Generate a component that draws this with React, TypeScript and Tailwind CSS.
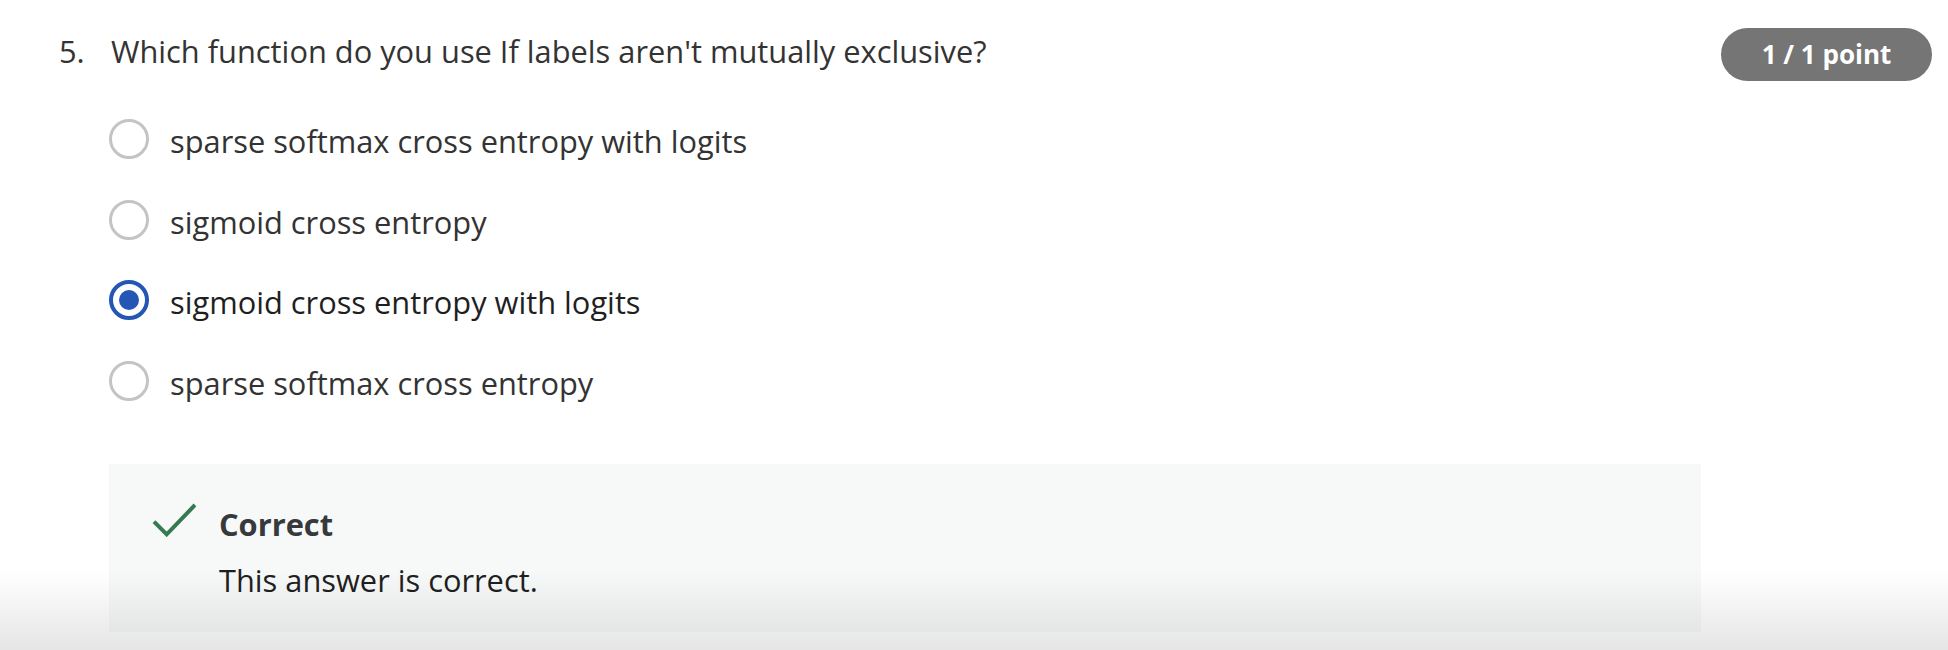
import React from 'react';

const options = [
  { id: 'a', label: 'sparse softmax cross entropy with logits', selected: false },
  { id: 'b', label: 'sigmoid cross entropy', selected: false },
  { id: 'c', label: 'sigmoid cross entropy with logits', selected: true },
  { id: 'd', label: 'sparse softmax cross entropy', selected: false },
];

function Radio({ selected }: { selected: boolean }) {
  if (selected) {
    return (
      <span className="flex h-[40px] w-[40px] shrink-0 items-center justify-center rounded-full border-[4px] border-[#2456b5] bg-white">
        <span className="h-[20px] w-[20px] rounded-full bg-[#2456b5]" />
      </span>
    );
  }
  return <span className="h-[40px] w-[40px] shrink-0 rounded-full border-[3px] border-[#c4c4c4] bg-white" />;
}

export default function App() {
  return (
    <div className="relative h-[650px] w-[1948px] overflow-hidden bg-white font-['Open_Sans',sans-serif] text-[#333333]">
      <div className="flex items-start justify-between pl-[59px] pr-[16px] pt-[28px]">
        <div className="mt-[2px] flex text-[30.8px] leading-[42px]">
          <span className="w-[52px]">5.</span>
          <span>Which function do you use If labels aren't mutually exclusive?</span>
        </div>
        <div className="flex h-[53px] w-[211px] items-center justify-center rounded-full bg-[#757575] text-[26px] font-bold text-white">
          1 / 1 point
        </div>
      </div>

      <div className="ml-[109px] mt-[38px]">
        <div className="flex flex-col gap-[40.6px]">
          {options.map((opt) => (
            <label key={opt.id} className="flex h-[40px] items-center gap-[21px]">
              <Radio selected={opt.selected} />
              <span
                className={`mt-[4px] text-[30.8px] leading-[42px] ${opt.selected ? 'text-[#1f1f1f]' : 'text-[#333333]'}`}
              >
                {opt.label}
              </span>
            </label>
          ))}
        </div>

        <div className="mt-[63px] h-[168px] w-[1592px] bg-[#f7f9f9] pl-[43px] pt-[40px]">
          <div className="flex items-start">
            <svg width="44" height="34" viewBox="0 0 44 34" className="mt-[-1px] shrink-0">
              <polyline points="2,18.7 14.7,31.3 43,2" fill="none" stroke="#357a50" strokeWidth="4" />
            </svg>
            <div className="ml-[23px]">
              <div className="text-[30.8px] font-bold leading-[40px] text-[#373a3c]">Correct</div>
              <div className="mt-[16px] text-[30.8px] leading-[40px] text-[#1f1f1f]">This answer is correct.</div>
            </div>
          </div>
        </div>
      </div>

      <div className="pointer-events-none absolute inset-x-0 bottom-0 h-[80px] bg-gradient-to-b from-transparent to-black/10" />
    </div>
  );
}
